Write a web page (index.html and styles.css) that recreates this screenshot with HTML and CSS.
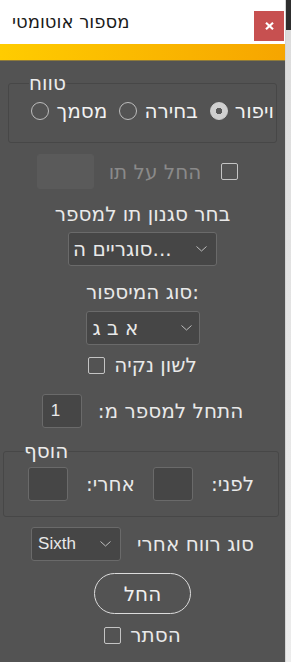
FILE: index.html
```html
<!DOCTYPE html>
<html lang="he">
<head>
    <meta charset="UTF-8">
    <meta name="viewport" content="width=device-width, initial-scale=1.0">
    <title>מספור אוטומטי</title>
    <link rel="stylesheet" href="styles.css">
</head>
<body>

<div class="window">
    <div class="panel">
        <header class="titlebar">
            <span class="title">מספור אוטומטי</span>
            <button class="close" type="button" aria-label="סגור">
                <svg width="9" height="8" viewBox="0 0 9 8"><path d="M1 0.8 L8 7.2 M8 0.8 L1 7.2" stroke="#ffffff" stroke-width="2.2" fill="none"/></svg>
            </button>
        </header>
        <div class="accent"></div>

        <main class="content" dir="rtl">
            <fieldset class="group range">
                <legend>טווח</legend>
                <div class="radios">
                    <label class="radio"><span>ויפור</span><span class="dot checked"></span></label>
                    <label class="radio"><span>בחירה</span><span class="dot"></span></label>
                    <label class="radio"><span>מסמך</span><span class="dot"></span></label>
                </div>
            </fieldset>

            <div class="row apply-char">
                <span class="box"></span>
                <span class="muted">החל על תו</span>
                <span class="field disabled"></span>
            </div>

            <div class="caption caption-style">בחר סגנון תו למספר</div>
            <div class="select select-style">
                <span class="value">...סוגריים ה</span>
                <svg class="chevron" width="11" height="6" viewBox="0 0 11 6"><path d="M0.5 0.5 L5.5 5 L10.5 0.5" fill="none" stroke="#bdbdbd" stroke-width="1"/></svg>
            </div>

            <div class="caption caption-type">:סוג המיספור</div>
            <div class="select select-type">
                <span class="value">א ב ג</span>
                <svg class="chevron" width="11" height="6" viewBox="0 0 11 6"><path d="M0.5 0.5 L5.5 5 L10.5 0.5" fill="none" stroke="#bdbdbd" stroke-width="1"/></svg>
            </div>

            <label class="row check clean">
                <span>לשון נקיה</span>
                <span class="box"></span>
            </label>

            <div class="row start-from">
                <span>התחל למספר מ:</span>
                <span class="field">1</span>
            </div>

            <fieldset class="group add">
                <legend>הוסף</legend>
                <div class="row add-row">
                    <span>לפני:</span>
                    <span class="field"></span>
                    <span>אחרי:</span>
                    <span class="field"></span>
                </div>
            </fieldset>

            <div class="row space-row">
                <span>סוג רווח אחרי</span>
                <div class="select select-space">
                    <span class="value latin">Sixth</span>
                    <svg class="chevron" width="11" height="6" viewBox="0 0 11 6"><path d="M0.5 0.5 L5.5 5 L10.5 0.5" fill="none" stroke="#bdbdbd" stroke-width="1"/></svg>
                </div>
            </div>

            <button class="apply" type="button">החל</button>

            <label class="row check hide">
                <span>הסתר</span>
                <span class="box"></span>
            </label>
        </main>
    </div>
    <div class="scrollbar"></div>
</div>

</body>
</html>
```

FILE: styles.css
```css
* {
    margin: 0;
    padding: 0;
    box-sizing: border-box;
}

html, body {
    height: 100%;
}

body {
    font-family: 'DejaVu Sans', sans-serif;
    background-color: #535353;
    color: #e9e9e9;
    font-size: 20px;
    overflow: hidden;
}

.window {
    display: flex;
    height: 662px;
}

.panel {
    width: 285px;
    display: flex;
    flex-direction: column;
    background-color: #535353;
}

.scrollbar {
    width: 6px;
    background: linear-gradient(to bottom, #2e2e2e 0, #2e2e2e 30px, #dcdcdc 30px, #ececec 100%);
    border-left: 1px solid #d4d4d4;
}

/* title bar */
.titlebar {
    height: 44px;
    background-color: #ffffff;
    display: flex;
    align-items: center;
    justify-content: space-between;
    padding: 0 1px 0 12px;
}

.title {
    color: #1b1b1b;
    font-size: 18px;
    line-height: 22px;
}

.close {
    width: 30px;
    height: 30px;
    border: none;
    background-color: #c75050;
    display: flex;
    align-items: center;
    justify-content: center;
    margin-top: 8px;
}

.accent {
    height: 17px;
    background: linear-gradient(to right, #ffcc00, #f6a500);
    border-bottom: 1px solid #8e7a3a;
}

/* content */
.content {
    display: flex;
    flex-direction: column;
    align-items: center;
    direction: rtl;
}

.group {
    border: 1px solid #474747;
    border-radius: 3px;
    align-self: stretch;
}

.group legend {
    margin-left: 20px;
    margin-right: auto;
    padding: 0;
    line-height: 20px;
    color: #ececec;
}

.range {
    margin: 12px 8px 0 8px;
    padding: 8px 2px 21px 0;
}

.radios {
    display: flex;
    gap: 12px;
    line-height: 20px;
    white-space: nowrap;
}

.radio {
    display: flex;
    align-items: center;
    gap: 7px;
    color: #f2f2f2;
}

.dot {
    width: 18px;
    height: 18px;
    border: 1px solid #bdbdbd;
    border-radius: 50%;
    display: inline-block;
}

.dot.checked {
    background: radial-gradient(circle, #5a5a5a 0, #5a5a5a 3px, #d0d0d0 3.5px);
    border-color: #d0d0d0;
}

.row {
    display: flex;
    align-items: center;
    line-height: 22px;
}

.box {
    width: 17px;
    height: 17px;
    border: 1px solid #c4c4c4;
    border-radius: 2px;
    display: inline-block;
}

.field {
    width: 40px;
    height: 34px;
    background-color: #464646;
    border: 1px solid #6a6a6a;
    border-radius: 3px;
    font-family: 'Liberation Sans', sans-serif;
    font-size: 17px;
    line-height: 32px;
    padding-left: 8px;
    text-align: left;
}

.field.disabled {
    width: 57px;
    height: 35px;
    background-color: #5a5a5a;
    border-color: #5a5a5a;
}

.muted {
    color: #8a8a8a;
}

.apply-char {
    margin-top: 11px;
    margin-right: 10px;
}

.apply-char .box {
    margin-left: 20px;
}

.apply-char .muted {
    margin-left: 15px;
}

.caption {
    line-height: 22px;
}

.caption-style {
    margin-top: 14px;
}

.caption-type {
    margin-top: 15px;
}

.select {
    height: 34px;
    background-color: #464646;
    border: 1px solid #6a6a6a;
    border-radius: 3px;
    display: flex;
    flex-direction: row-reverse;
    align-items: center;
    justify-content: space-between;
    padding: 0 9px 0 4px;
}

.select .value {
    white-space: nowrap;
}

.select .latin {
    font-family: 'Liberation Sans', sans-serif;
    font-size: 17px;
}

.select-style {
    width: 149px;
    margin-top: 7px;
}

.select-type {
    width: 114px;
    margin-top: 8px;
    padding-left: 6px;
    padding-right: 7px;
}

.select-space {
    width: 90px;
    padding-left: 6px;
    padding-right: 9px;
}

.check {
    gap: 9px;
}

.clean {
    margin-top: 9px;
}

.start-from {
    margin-top: 18px;
    gap: 16px;
}

.add {
    margin: 13px 6px 0 3px;
    padding: 6px 0 15px 0;
}

.add-row {
    justify-content: center;
    gap: 18px;
}

.space-row {
    margin-top: 10px;
    gap: 16px;
}

.apply {
    margin-top: 12px;
    width: 97px;
    height: 41px;
    border: 1px solid #dcdcdc;
    border-radius: 21px;
    background: transparent;
    color: #f0f0f0;
    font-family: 'DejaVu Sans', sans-serif;
    font-size: 20px;
}

.hide {
    margin-top: 10px;
}
```
